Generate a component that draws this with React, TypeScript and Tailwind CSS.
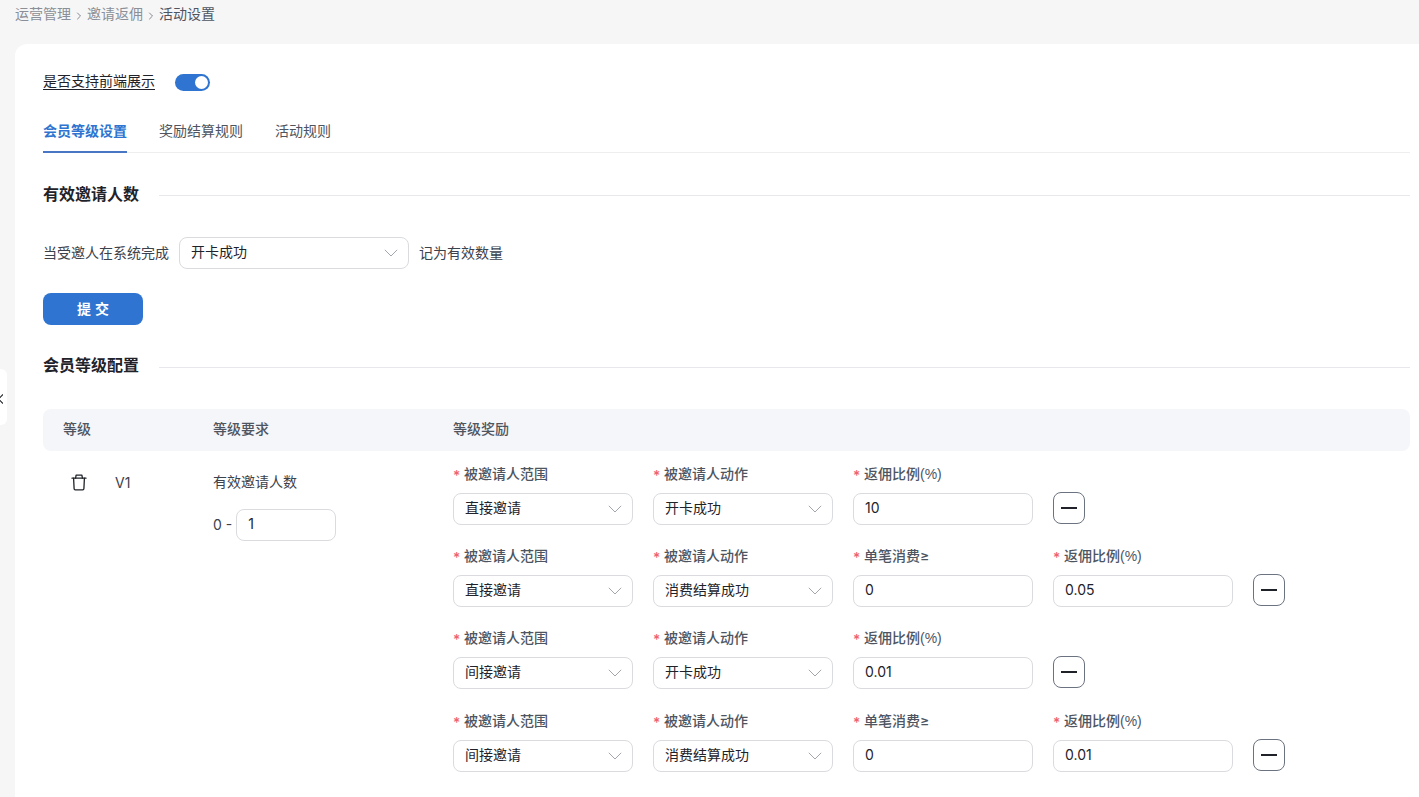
import React from "react";
import { ChevronRight } from "lucide-react";

const font = { fontFamily: 'Inter, "Noto Sans CJK SC", sans-serif' };

function Chevron() {
  return (
    <svg width="14" height="8" viewBox="0 0 14 8" fill="none" stroke="#a3a7ad" strokeWidth="1" className="shrink-0">
      <path d="M.8.8 7 7l6.2-6.2" />
    </svg>
  );
}

function Select({ value, w = "w-[180px]" }: { value: string; w?: string }) {
  return (
    <div className={`${w} h-8 shrink-0 flex items-center justify-between pl-[11px] pr-[10px] border border-[#d9dbde] rounded-lg bg-white text-sm text-[#1f2329]`}>
      <span className="-translate-y-px">{value}</span>
      <Chevron />
    </div>
  );
}

function Input({ value, w = "w-[180px]" }: { value: string; w?: string }) {
  return (
    <div className={`${w} h-8 shrink-0 flex items-center px-[11px] pb-[2px] border border-[#d9dbde] rounded-lg bg-white text-sm text-[#1f2329]`}>
      {value}
    </div>
  );
}

function Field({ label, children }: { label: React.ReactNode; children: React.ReactNode }) {
  return (
    <div className="w-[180px] flex flex-col">
      <div className="h-[18px] mb-[9px] flex items-center gap-[4px] text-sm leading-[18px] font-medium text-[#4e5561] whitespace-nowrap">
        <span className="text-[#f0616d] text-sm w-[7px] pt-[2px]">*</span>
        <span className="-translate-y-px">{label}</span>
      </div>
      {children}
    </div>
  );
}

function Minus() {
  return (
    <div className="w-8 h-8 mt-[26px] shrink-0 flex items-center justify-center border border-[#6b7280] rounded-lg bg-white">
      <div className="w-[16px] h-[2px] bg-[#1f2329]" />
    </div>
  );
}

const RateLabel = (
  <>
    返佣比例<span className="font-['Liberation_Sans']">(%)</span>
  </>
);

function Rule({ scope, action, min, rate, mt }: { scope: string; action: string; min?: string; rate: string; mt: string }) {
  return (
    <div className={`flex gap-5 ${mt}`}>
      <Field label="被邀请人范围"><Select value={scope} /></Field>
      <Field label="被邀请人动作"><Select value={action} /></Field>
      {min !== undefined && <Field label="单笔消费≥"><Input value={min} /></Field>}
      <Field label={RateLabel}><Input value={rate} /></Field>
      <Minus />
    </div>
  );
}

function SectionTitle({ children, lineClass = "" }: { children: React.ReactNode; lineClass?: string }) {
  return (
    <div className="flex items-center gap-5 h-6">
      <h3 className="text-base font-semibold text-[#1f2329] whitespace-nowrap -translate-y-px">{children}</h3>
      <div className={`flex-1 h-px bg-[#e6e8eb] ${lineClass}`} />
    </div>
  );
}

function TrashIcon() {
  return (
    <svg width="16" height="17" viewBox="0 0 16 17" fill="none" stroke="#1f2329" strokeWidth="1.3" strokeLinejoin="round" strokeLinecap="round" className="shrink-0">
      <path d="M1 4.2h14" />
      <path d="M4.6 4.2l.5-3h5.8l.5 3" />
      <path d="M2.6 4.2l.5 10.4c0 .7.5 1.2 1.2 1.2h7.4c.7 0 1.2-.5 1.2-1.2l.5-10.4" />
    </svg>
  );
}

export default function App() {
  return (
    <div style={font} className="relative w-[1419px] h-[797px] overflow-hidden bg-[#f6f6f7]">
      <nav className="h-[44px] pl-[15px] pt-[5px] flex items-start text-sm leading-[18px] text-[#8a8f98]">
        <span>运营管理</span>
        <ChevronRight size={12} strokeWidth={1.7} className="mx-[2px] mt-[5px] text-[#70757f]" />
        <span>邀请返佣</span>
        <ChevronRight size={12} strokeWidth={1.7} className="mx-[2px] mt-[5px] text-[#70757f]" />
        <span className="text-[#4e5561]">活动设置</span>
      </nav>

      <div className="absolute left-0 top-[369px] w-[7px] h-[56px] bg-white rounded-r-md overflow-hidden flex items-center">
        <svg width="3" height="10" viewBox="0 0 3 10" fill="none" stroke="#1f2329" strokeWidth="1.2" className="mt-[3px]">
          <path d="M3 0.5-1.5 5 3 9.5" />
        </svg>
      </div>

      <main className="ml-[15px] h-[753px] bg-white rounded-tl-xl pl-[28px] pr-[9px] pt-[29px]">
        <div className="flex items-center h-[18px]">
          <span className="text-sm text-[#1f2329] underline underline-offset-[3px] -translate-y-px">是否支持前端展示</span>
          <span className="ml-5 w-[35px] h-[17px] rounded-full bg-[#2e74d0] relative">
            <span className="absolute right-[2px] top-[2px] w-[13px] h-[13px] rounded-full bg-white" />
          </span>
        </div>

        <div className="flex gap-8 h-[40px] mt-[22px] border-b border-[#eceef0] text-sm text-[#4e5561]">
          <div className="h-[40px] border-b-2 border-[#4a74c4] pt-2 font-semibold text-[#2e74d0]">会员等级设置</div>
          <div className="pt-2">奖励结算规则</div>
          <div className="pt-2">活动规则</div>
        </div>

        <div className="mt-[30px]"><SectionTitle>有效邀请人数</SectionTitle></div>

        <div className="flex items-center mt-[30px] text-sm text-[#3c424c]">
          <span>当受邀人在系统完成</span>
          <div className="mx-[10px]"><Select value="开卡成功" w="w-[230px]" /></div>
          <span>记为有效数量</span>
        </div>

        <button className="block mt-6 w-[100px] h-8 pl-1 pb-px rounded-lg bg-[#2e74d0] text-white text-sm font-semibold tracking-[4px]">提交</button>

        <div className="mt-[29px]"><SectionTitle lineClass="translate-y-px">会员等级配置</SectionTitle></div>

        <div className="mt-[31px] h-[42px] pb-[3px] flex items-center rounded-lg bg-[#f5f6f9] text-sm font-medium text-[#4e5561]">
          <div className="w-[170px] pl-5">等级</div>
          <div className="w-[240px]">等级要求</div>
          <div>等级奖励</div>
        </div>

        <div className="flex">
          <div className="w-[170px] flex items-start pl-[28px] pt-[23px]">
            <TrashIcon />
            <span className="ml-7 text-sm leading-[18px] text-[#3c424c]">V1</span>
          </div>
          <div className="w-[240px] pt-[22px] text-sm text-[#3c424c]">
            <div className="leading-[18px]">有效邀请人数</div>
            <div className="flex items-center mt-[18px] gap-1">
              <span>0 -</span>
              <Input value="1" w="w-[100px]" />
            </div>
          </div>
          <div className="pt-[15px]">
            <Rule scope="直接邀请" action="开卡成功" rate="10" mt="" />
            <Rule scope="直接邀请" action="消费结算成功" min="0" rate="0.05" mt="mt-[23px]" />
            <Rule scope="间接邀请" action="开卡成功" rate="0.01" mt="mt-[23px]" />
            <Rule scope="间接邀请" action="消费结算成功" min="0" rate="0.01" mt="mt-[24px]" />
          </div>
        </div>
      </main>
    </div>
  );
}
